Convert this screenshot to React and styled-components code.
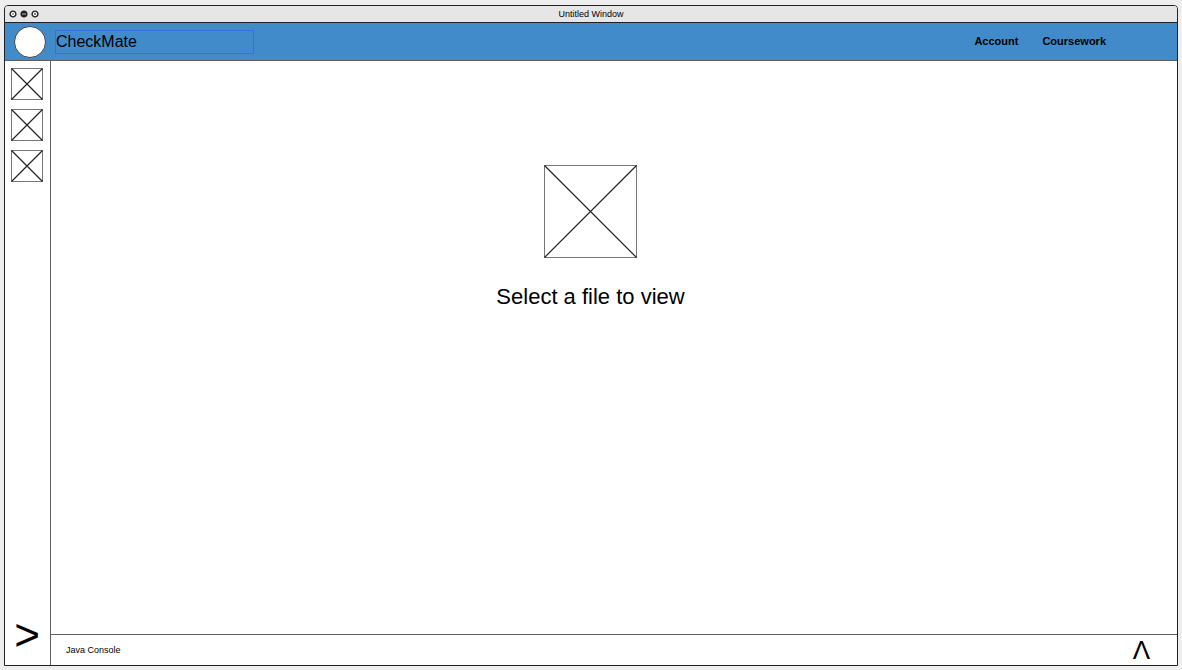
import React from "react";
import styled, { createGlobalStyle } from "styled-components";

const ink = "#222222";
const line = "#5f5f5f";

const GlobalStyle = createGlobalStyle`
  * { box-sizing: border-box; }
  body {
    margin: 0;
    background: #eeeeee;
    color: #000000;
    font-family: "Liberation Sans", Arial, sans-serif;
  }
`;

const Page = styled.div`
  min-height: 100vh;
  padding: 5px 4px 4px;
  display: flex;
`;

const Window = styled.div`
  flex: 1;
  display: flex;
  flex-direction: column;
  background: #ffffff;
  border: 1px solid ${ink};
  border-radius: 4px 4px 0 0;
  overflow: hidden;
`;

const TitleBar = styled.div`
  height: 17px;
  display: grid;
  grid-template-columns: 1fr auto 1fr;
  align-items: center;
  padding: 0 4px;
  background: #e6e6e6;
  border-bottom: 1px solid ${ink};
  font-size: 9px;
  line-height: 12px;
`;

const WindowControls = styled.div`
  display: flex;
  gap: 3px;
`;

const ControlButton = styled.button`
  display: block;
  width: 8px;
  height: 8px;
  padding: 0;
  border: 0;
  background: none;

  svg { display: block; }
`;

const Header = styled.header`
  height: 38px;
  display: flex;
  align-items: center;
  padding: 0 71px 0 9px;
  background: #428bca;
  border-bottom: 1px solid ${line};
`;

const Logo = styled.div`
  width: 32px;
  height: 32px;
  border: 1px solid #444444;
  border-radius: 50%;
  background: #ffffff;
`;

const Brand = styled.h1`
  width: 199px;
  height: 24px;
  margin: 0 0 0 9px;
  border: 1px solid #4169e1;
  font-size: 16px;
  font-weight: 400;
  line-height: 22px;
`;

const Nav = styled.nav`
  display: flex;
  gap: 24px;
  margin-left: auto;
`;

const NavLink = styled.a`
  color: #000000;
  font-size: 11px;
  font-weight: 700;
  line-height: 14px;
  padding-bottom: 2px;
  text-decoration: none;
`;

const Body = styled.div`
  flex: 1;
  display: flex;
`;

const Sidebar = styled.aside`
  width: 46px;
  display: flex;
  flex-direction: column;
  align-items: center;
  gap: 9px;
  padding: 7px 1px 10px 0;
  border-right: 1px solid ${line};
`;

const IconButton = styled.button`
  padding: 0;
  border: 0;
  background: none;
  color: #000000;

  svg { display: block; }
`;

const GlyphButton = styled(IconButton)`
  font-family: "Liberation Sans", Arial, sans-serif;
  font-size: ${(p) => p.$size}px;
  line-height: ${(p) => p.$leading}px;
`;

const ExpandButton = styled(GlyphButton)`
  margin-top: auto;
`;

const Workspace = styled.div`
  flex: 1;
  display: flex;
  flex-direction: column;
`;

const Viewer = styled.main`
  flex: 1;
  display: flex;
  flex-direction: column;
  align-items: center;
  padding: 104px 47px 0 0;

  svg { display: block; }
`;

const Prompt = styled.p`
  margin: 26px 0 0;
  font-size: 22px;
  line-height: 26px;
`;

const Console = styled.footer`
  height: 31px;
  display: flex;
  align-items: center;
  justify-content: space-between;
  padding: 0 27px 0 15px;
  border-top: 1px solid ${line};
  font-size: 9px;
  line-height: 12px;
`;

const Placeholder = ({ size }) => (
  <svg width={size} height={size} aria-hidden="true" fill="none">
    <rect x="0.5" y="0.5" width={size - 1} height={size - 1} stroke="#777777" />
    <path
      d={`M0.5 0.5L${size - 0.5} ${size - 0.5}M${size - 0.5} 0.5L0.5 ${size - 0.5}`}
      stroke="#222222"
      strokeWidth="1.2"
    />
  </svg>
);

const controls = [
  { label: "Maximize", mark: "M4 2.8v2.4M2.8 4h2.4", fill: "#ffffff", stroke: "#888888" },
  { label: "Minimize", mark: "M2 4h4", fill: "#222222", stroke: "#c8c8c8" },
  { label: "Close", mark: "M3 3l2 2M5 3l-2 2", fill: "#ffffff", stroke: "#666666" },
];

const files = ["Files", "Search", "Settings"];

export default function App() {
  return (
    <>
      <GlobalStyle />
      <Page>
        <Window>
          <TitleBar>
            <WindowControls>
              {controls.map((c) => (
                <ControlButton key={c.label} type="button" aria-label={c.label}>
                  <svg width="8" height="8" viewBox="0 0 8 8">
                    <circle cx="4" cy="4" r="2.9" fill={c.fill} stroke={ink} strokeWidth="1.4" />
                    <path d={c.mark} stroke={c.stroke} strokeWidth="0.9" />
                  </svg>
                </ControlButton>
              ))}
            </WindowControls>
            <span>Untitled Window</span>
          </TitleBar>
          <Header>
            <Logo />
            <Brand>CheckMate</Brand>
            <Nav>
              <NavLink href="#account">Account</NavLink>
              <NavLink href="#coursework">Coursework</NavLink>
            </Nav>
          </Header>
          <Body>
            <Sidebar>
              {files.map((f) => (
                <IconButton key={f} type="button" aria-label={f}>
                  <Placeholder size={32} />
                </IconButton>
              ))}
              <ExpandButton type="button" $size={44} $leading={40}>&gt;</ExpandButton>
            </Sidebar>
            <Workspace>
              <Viewer>
                <Placeholder size={93} />
                <Prompt>Select a file to view</Prompt>
              </Viewer>
              <Console>
                <span>Java Console</span>
                <GlyphButton type="button" $size={26} $leading={30}>Λ</GlyphButton>
              </Console>
            </Workspace>
          </Body>
        </Window>
      </Page>
    </>
  );
}
